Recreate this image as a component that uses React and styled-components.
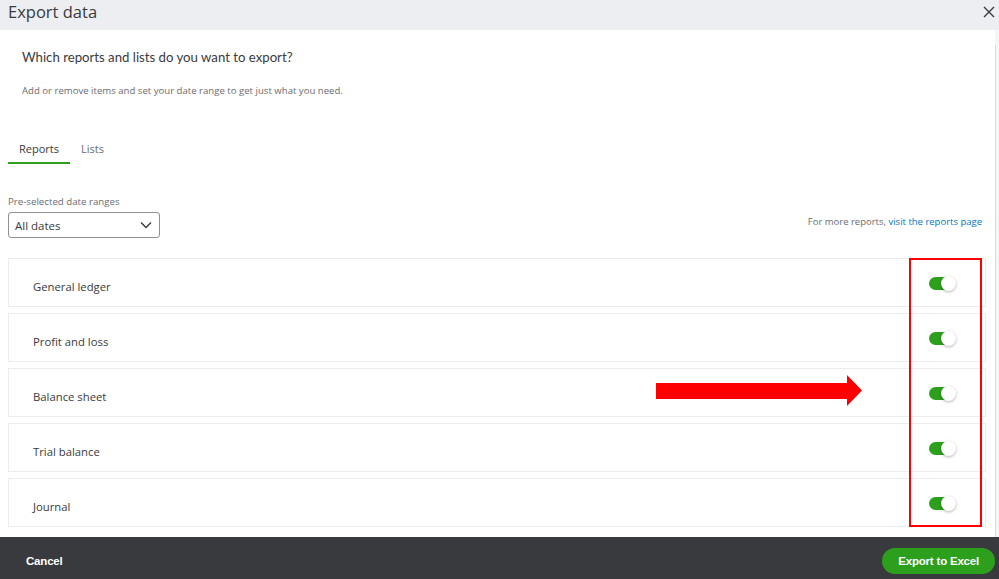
import React from "react";
import styled, { createGlobalStyle } from "styled-components";

const GlobalStyle = createGlobalStyle`
  html, body {
    margin: 0;
    padding: 0;
    background: #ffffff;
    font-family: "Open Sans", "Noto Sans", Arial, sans-serif;
    color: #393a3d;
  }
`;

const Page = styled.div`
  width: 999px;
  height: 579px;
  display: flex;
  flex-direction: column;
  overflow: hidden;
  background: #f4f5f8;
`;

const Header = styled.div`
  height: 30px;
  flex-shrink: 0;
  background: #eceef1;
  display: flex;
  align-items: center;
  justify-content: space-between;
  padding: 0 3px 0 8px;
`;

const Title = styled.div`
  font-size: 16.5px;
  color: #393a3d;
  margin-top: -8px;
`;

const CloseButton = styled.div`
  width: 14px;
  height: 14px;
  display: flex;
  align-items: center;
  justify-content: center;
  margin-top: -6px;
  cursor: pointer;
`;

const Body = styled.div`
  flex: 1;
  display: flex;
  min-height: 0;
`;

const Content = styled.div`
  flex: 1;
  background: #ffffff;
  padding: 0 0 0 8px;
  display: flex;
  flex-direction: column;
`;

const Scrollbar = styled.div`
  width: 3px;
  background: #f4f5f8;
  border-left: 1px solid #d8d9dc;
  margin-top: 15px;
`;

const Intro = styled.div`
  padding: 17px 0 0 14px;
`;

const Question = styled.div`
  font-family: Lato, "Open Sans", Arial, sans-serif;
  font-size: 13.2px;
  line-height: 20px;
  color: #393a3d;
`;

const Hint = styled.div`
  font-size: 9.6px;
  line-height: 14px;
  color: #6b6c72;
  margin-top: 17px;
`;

const Tabs = styled.div`
  display: flex;
  margin-top: 43px;
`;

const Tab = styled.div`
  padding: 0 11px 5px;
  font-size: 11px;
  line-height: 16px;
  color: ${(p) => (p.active ? "#393a3d" : "#6b6c72")};
  border-bottom: 2px solid ${(p) => (p.active ? "#2ca01c" : "transparent")};
`;

const FilterRow = styled.div`
  display: flex;
  justify-content: space-between;
  align-items: flex-end;
  margin-top: 31px;
  padding-right: 13px;
`;

const Field = styled.div`
  display: flex;
  flex-direction: column;
`;

const FieldLabel = styled.div`
  font-size: 9.7px;
  line-height: 14px;
  color: #6b6c72;
  margin-bottom: 3px;
`;

const Select = styled.div`
  width: 137px;
  height: 24px;
  border: 1px solid #8d9096;
  border-radius: 3px;
  display: flex;
  align-items: center;
  justify-content: space-between;
  padding: 0 7px 0 6px;
  font-size: 11.5px;
  color: #393a3d;
`;

const MoreReports = styled.div`
  font-size: 9.5px;
  color: #6b6c72;
  margin-bottom: 10px;
`;

const Link = styled.span`
  color: #0077c5;
`;

const RowList = styled.div`
  display: flex;
  flex-direction: column;
  gap: 6px;
  margin-top: 20px;
  padding-right: 9px;
  position: relative;
`;

const ReportRow = styled.div`
  height: 49px;
  box-sizing: border-box;
  border: 1px solid #ececee;
  display: flex;
  align-items: center;
  justify-content: space-between;
  padding: 7px 30px 0 24px;
  font-size: 11.3px;
  color: #393a3d;
`;

const Toggle = styled.div`
  width: 26px;
  height: 13px;
  border-radius: 7px;
  background: #2ca01c;
  position: relative;
  margin-top: -6px;

  &::after {
    content: "";
    position: absolute;
    right: -1px;
    top: -1px;
    width: 15px;
    height: 15px;
    border-radius: 50%;
    background: #ffffff;
    box-shadow: 0 1px 3px rgba(0, 0, 0, 0.3);
  }
`;

const Highlight = styled.div`
  position: absolute;
  left: 901px;
  top: 0;
  width: 69px;
  height: 265px;
  border: 2px solid #ff0000;
  pointer-events: none;
`;

const Arrow = styled.svg`
  position: absolute;
  left: 648px;
  top: 117px;
`;

const Footer = styled.div`
  height: 42px;
  flex-shrink: 0;
  box-sizing: border-box;
  background: #393a3d;
  display: flex;
  align-items: center;
  justify-content: space-between;
  padding: 5px 4px 0 26px;
`;

const CancelButton = styled.div`
  color: #ffffff;
  font-family: "Liberation Sans", Arial, sans-serif;
  font-weight: bold;
  font-size: 11.5px;
  letter-spacing: -0.2px;
  cursor: pointer;
`;

const ExportButton = styled.div`
  height: 26px;
  padding: 0 16px;
  border-radius: 13px;
  background: #2ca01c;
  color: #ffffff;
  font-family: "Liberation Sans", Arial, sans-serif;
  font-weight: bold;
  font-size: 11.5px;
  letter-spacing: -0.2px;
  display: flex;
  align-items: center;
  cursor: pointer;
`;

const reports = [
  "General ledger",
  "Profit and loss",
  "Balance sheet",
  "Trial balance",
  "Journal",
];

export default function App() {
  return (
    <Page>
      <GlobalStyle />
      <Header>
        <Title>Export data</Title>
        <CloseButton>
          <svg width="12" height="12" viewBox="0 0 12 12">
            <path d="M1 1 L11 11 M11 1 L1 11" stroke="#393a3d" strokeWidth="1.4" />
          </svg>
        </CloseButton>
      </Header>
      <Body>
        <Content>
          <Intro>
            <Question>Which reports and lists do you want to export?</Question>
            <Hint>Add or remove items and set your date range to get just what you need.</Hint>
          </Intro>
          <Tabs>
            <Tab active>Reports</Tab>
            <Tab>Lists</Tab>
          </Tabs>
          <FilterRow>
            <Field>
              <FieldLabel>Pre-selected date ranges</FieldLabel>
              <Select>
                <span>All dates</span>
                <svg width="12" height="8" viewBox="0 0 12 8">
                  <path d="M1 1.5 L6 6.5 L11 1.5" fill="none" stroke="#393a3d" strokeWidth="1.4" />
                </svg>
              </Select>
            </Field>
            <MoreReports>
              For more reports, <Link>visit the reports page</Link>
            </MoreReports>
          </FilterRow>
          <RowList>
            {reports.map((r) => (
              <ReportRow key={r}>
                <span>{r}</span>
                <Toggle />
              </ReportRow>
            ))}
            <Arrow width="216" height="32" viewBox="0 0 216 32">
              <polygon points="0,8 191,8 191,0 206,15.5 191,31 191,24 0,24" fill="#ff0000" />
            </Arrow>
            <Highlight />
          </RowList>
        </Content>
        <Scrollbar />
      </Body>
      <Footer>
        <CancelButton>Cancel</CancelButton>
        <ExportButton>Export to Excel</ExportButton>
      </Footer>
    </Page>
  );
}
